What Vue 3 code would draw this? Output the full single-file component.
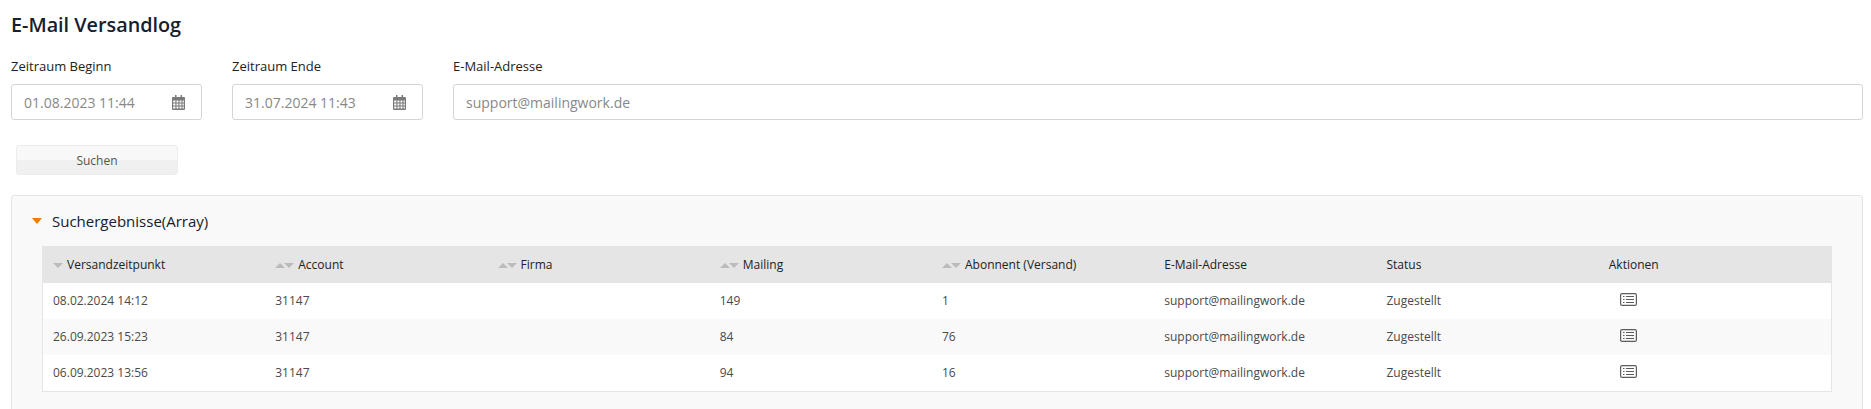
<script setup>
const columns = [
  { label: 'Versandzeitpunkt', sort: 'down' },
  { label: 'Account', sort: 'both' },
  { label: 'Firma', sort: 'both' },
  { label: 'Mailing', sort: 'both' },
  { label: 'Abonnent (Versand)', sort: 'both' },
  { label: 'E-Mail-Adresse', sort: '' },
  { label: 'Status', sort: '' },
  { label: 'Aktionen', sort: '' }
]
const rows = [
  ['08.02.2024 14:12', '31147', '', '149', '1', 'support@mailingwork.de', 'Zugestellt'],
  ['26.09.2023 15:23', '31147', '', '84', '76', 'support@mailingwork.de', 'Zugestellt'],
  ['06.09.2023 13:56', '31147', '', '94', '16', 'support@mailingwork.de', 'Zugestellt']
]
</script>

<template>
  <div class="page">
    <h1 class="title">E-Mail Versandlog</h1>
    <div class="fields">
      <div class="field date">
        <label>Zeitraum Beginn</label>
        <div class="input">
          <span>01.08.2023 11:44</span>
          <svg class="cal" width="13" height="15" viewBox="0 0 13 15"><path fill="#7a7a7a" fill-rule="evenodd" d="M3 0h1.500v2H8.500V0H10v2h2a1 1 0 0 1 1 1v11a1 1 0 0 1-1 1H1a1 1 0 0 1-1-1V3a1 1 0 0 1 1-1h2zM1.200 5.500v2h2.200v-2zm3.300 0v2h1.900v-2zm3 0v2h1.900v-2zm3 0v2h1.300v-2zM1.200 8.500v2h2.200v-2zm3.300 0v2h1.900v-2zm3 0v2h1.900v-2zm3 0v2h1.300v-2zM1.200 11.500v2h2.200v-2zm3.300 0v2h1.900v-2zm3 0v2h1.900v-2zm3 0v2h1.300v-2z"/></svg>
        </div>
      </div>
      <div class="field date">
        <label>Zeitraum Ende</label>
        <div class="input">
          <span>31.07.2024 11:43</span>
          <svg class="cal" width="13" height="15" viewBox="0 0 13 15"><path fill="#7a7a7a" fill-rule="evenodd" d="M3 0h1.500v2H8.500V0H10v2h2a1 1 0 0 1 1 1v11a1 1 0 0 1-1 1H1a1 1 0 0 1-1-1V3a1 1 0 0 1 1-1h2zM1.200 5.500v2h2.200v-2zm3.300 0v2h1.900v-2zm3 0v2h1.900v-2zm3 0v2h1.300v-2zM1.200 8.500v2h2.200v-2zm3.300 0v2h1.900v-2zm3 0v2h1.900v-2zm3 0v2h1.300v-2zM1.200 11.500v2h2.200v-2zm3.300 0v2h1.900v-2zm3 0v2h1.900v-2zm3 0v2h1.300v-2z"/></svg>
        </div>
      </div>
      <div class="field grow">
        <label>E-Mail-Adresse</label>
        <div class="input"><span>support@mailingwork.de</span></div>
      </div>
    </div>
    <button class="search" type="button">Suchen</button>
    <section class="panel">
      <h2 class="panel-title"><i class="caret"></i>Suchergebnisse(Array)</h2>
      <div class="table">
        <div class="row head">
          <div v-for="c in columns" :key="c.label" class="cell">
            <span v-if="c.sort" class="sort">
              <i v-if="c.sort === 'both'" class="up"></i><i class="down"></i>
            </span>{{ c.label }}
          </div>
        </div>
        <div v-for="(r, i) in rows" :key="i" class="row body">
          <div v-for="(v, j) in r" :key="j" class="cell">{{ v }}</div>
          <div class="cell action">
            <svg width="17" height="13" viewBox="0 0 17 13" fill="none">
              <rect x=".6" y=".6" width="15.800" height="11.800" rx="1.500" stroke="#5c5c5c" stroke-width="1.200"/>
              <path d="M3 3.500h1.500M3 6.500h1.500M3 9.500h1.500M6 3.500h8M6 6.500h8M6 9.500h8" stroke="#5c5c5c" stroke-width="1.100"/>
            </svg>
          </div>
        </div>
      </div>
    </section>
  </div>
</template>

<style>
html, body { margin: 0; background: #fff; }
</style>

<style scoped>
.page {
  box-sizing: border-box;
  height: 409px;
  overflow: hidden;
  padding: 11px 8px 0 11px;
  font-family: "Open Sans", sans-serif;
}
.title {
  margin: 0;
  font-size: 19.8px;
  line-height: 28px;
  font-weight: 550;
  color: #14202e;
}
.fields {
  display: flex;
  gap: 30px;
  margin-top: 18px;
}
.field label {
  display: block;
  font-size: 13px;
  line-height: 18px;
  font-weight: 500;
  color: #222;
  margin-bottom: 9px;
}
.date { width: 191px; }
.grow { flex: 1; }
.input {
  box-sizing: border-box;
  height: 36px;
  border: 1px solid #d5d5d5;
  border-radius: 3px;
  background: #fff;
  padding: 0 16px 0 12px;
  display: flex;
  align-items: center;
  justify-content: space-between;
  font-size: 14px;
  color: #888;
}
.search {
  display: block;
  box-sizing: border-box;
  width: 162px;
  height: 30px;
  margin: 25px 0 0 5px;
  padding: 1px 0 0;
  border: 1px solid #ececec;
  border-radius: 3px;
  background: linear-gradient(#f8f8f8 50%, #f0f0f0 50%);
  font-family: inherit;
  font-size: 12px;
  color: #555;
}
.panel {
  margin-top: 20px;
  height: 230px;
  box-sizing: border-box;
  border: 1px solid #e5e5e5;
  border-radius: 3px;
  background: #f9f9f9;
  padding: 14px 30px 0 30px;
}
.panel-title {
  margin: 0 0 14px -10px;
  height: 22px;
  line-height: 22px;
  font-size: 15px;
  font-weight: 450;
  color: #14202e;
  display: flex;
  align-items: center;
}
.caret {
  width: 0;
  height: 0;
  margin-right: 10px;
  border: 5px solid transparent;
  border-bottom-width: 0;
  border-top: 6px solid #f07c00;
}
.table {
  border: 1px solid #e5e5e5;
  border-top: 0;
}
.row {
  display: grid;
  grid-template-columns: repeat(8, 1fr);
  padding: 0 0 0 10px;
  align-items: center;
}
.head {
  height: 37px;
  background: #e5e5e5;
  font-size: 12px;
  font-weight: 450;
  color: #222;
}
.body {
  box-sizing: border-box;
  height: 36px;
  padding-bottom: 1px;
  background: #fff;
  font-size: 12px;
  color: #4a4a4a;
}
.body:nth-child(odd) { background: #f9f9f9; }
.sort {
  display: inline-flex;
  margin-right: 4px;
  vertical-align: 1px;
}
.sort i {
  width: 0;
  height: 0;
  border-left: 5px solid transparent;
  border-right: 5px solid transparent;
}
.up { border-bottom: 5px solid #bbb; margin-right: -1px; }
.down { border-top: 5px solid #bbb; }
.action { padding-left: 11px; margin-top: -2px; line-height: 0; }
</style>
